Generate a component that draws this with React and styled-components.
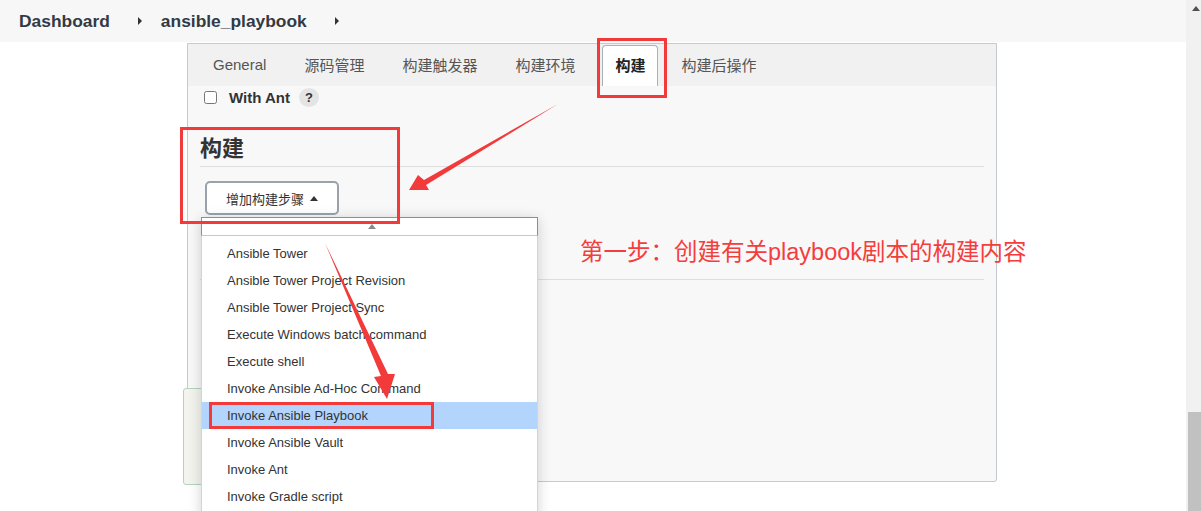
import React from "react";
import styled, { createGlobalStyle } from "styled-components";

const GlobalStyle = createGlobalStyle`
  html, body {
    margin: 0;
    padding: 0;
    background: #ffffff;
    overflow: hidden;
  }
  body {
    font-family: "Liberation Sans", "Noto Sans CJK SC", sans-serif;
    color: #333333;
  }
`;

const Page = styled.div`
  position: relative;
  display: flex;
  height: 511px;
  overflow: hidden;
`;

const Main = styled.div`
  flex: 1;
  min-width: 0;
  display: flex;
  flex-direction: column;
`;

const TopBar = styled.div`
  height: 42px;
  background: #f7f7f7;
  display: flex;
  align-items: center;
  padding-left: 19px;
`;

const Crumb = styled.span`
  font-size: 17.4px;
  font-weight: bold;
  color: #333a44;
  margin-right: 28px;
`;

const CrumbCaret = styled.span`
  width: 0;
  height: 0;
  border-top: 4px solid transparent;
  border-bottom: 4px solid transparent;
  border-left: 4px solid #333;
  margin-right: 19px;
`;

const Content = styled.div`
  padding: 1px 0 0 187px;
`;

const Panel = styled.div`
  position: relative;
  box-sizing: border-box;
  width: 810px;
  height: 439px;
  border: 1px solid #c4cad0;
  border-radius: 0 0 3px 0;
  background: #f8f8f8;
`;

const TabBar = styled.div`
  height: 42px;
  background: #f1f1f1;
  display: flex;
  align-items: flex-end;
  gap: 16px;
  padding-left: 14px;
`;

const Tab = styled.div`
  box-sizing: border-box;
  height: 41px;
  padding: 0 ${(p) => (p.$active ? 12 : 10)}px 3px;
  margin-right: ${(p) => (p.$active ? -4 : 0)}px;
  display: flex;
  align-items: center;
  font-size: 15px;
  color: ${(p) => (p.$active ? "#222" : "#555")};
  font-weight: ${(p) => (p.$active ? "bold" : "normal")};
  background: ${(p) => (p.$active ? "#fff" : "transparent")};
  border: 1px solid ${(p) => (p.$active ? "#a9b1b8" : "transparent")};
  border-bottom: none;
  border-radius: 4px 4px 0 0;
`;

const Body = styled.div`
  padding: 0 12px 0 12px;
`;

const CheckRow = styled.div`
  display: flex;
  align-items: center;
  height: 18px;
  margin-top: 2px;
  padding-left: 4px;
`;

const Check = styled.input`
  width: 13px;
  height: 13px;
  margin: 0 12px 0 0;
`;

const CheckLabel = styled.span`
  font-size: 15px;
  font-weight: bold;
  color: #333;
`;

const Help = styled.span`
  width: 20px;
  height: 19px;
  border-radius: 50%;
  background: #e4e4e4;
  margin-left: 9px;
  display: flex;
  align-items: center;
  justify-content: center;
  font-size: 13px;
  font-weight: bold;
  color: #333;
`;

const Heading = styled.h2`
  margin: 27px 0 0;
  font-size: 22px;
  font-weight: bold;
  line-height: 32px;
  padding-bottom: 1px;
  border-bottom: 1px solid #dedede;
  color: #333;
`;

const StepWrap = styled.div`
  position: relative;
  width: 134px;
  margin: 14px 0 0 5px;
`;

const AddButton = styled.button`
  box-sizing: border-box;
  width: 134px;
  height: 34px;
  border: 2px solid #9aa3ab;
  border-radius: 5px;
  background: #fff;
  font-family: inherit;
  font-size: 13px;
  color: #333;
  display: flex;
  align-items: center;
  justify-content: center;
  gap: 6px;
  padding: 0;
`;

const UpCaret = styled.span`
  width: 0;
  height: 0;
  border-left: ${(p) => p.$size}px solid transparent;
  border-right: ${(p) => p.$size}px solid transparent;
  border-bottom: ${(p) => p.$size + 1}px solid ${(p) => p.$color};
`;

const Dropdown = styled.div`
  position: absolute;
  top: calc(100% + 2px);
  left: -4px;
  width: 337px;
  background: #fff;
  box-shadow: 0 2px 12px rgba(0, 0, 0, 0.18);
  z-index: 2;
`;

const DropHeader = styled.div`
  box-sizing: border-box;
  height: 19px;
  border: 1px solid #8f8f8f;
  border-bottom-color: #c8c8c8;
  display: flex;
  align-items: center;
  justify-content: center;
  padding-left: 4px;
`;

const DropList = styled.div`
  padding: 4px 0 40px;
  border-left: 1px solid #d4d4d4;
  border-right: 1px solid #d4d4d4;
`;

const DropItem = styled.div`
  height: 27px;
  line-height: 27px;
  padding-left: 25px;
  font-size: 13px;
  color: #333;
  background: ${(p) => (p.$active ? "#b3d4fc" : "transparent")};
`;

const Divider = styled.div`
  margin-top: 64px;
  border-top: 1px solid #dedede;
`;

const BottomBar = styled.div`
  position: absolute;
  left: -5px;
  top: 344px;
  box-sizing: border-box;
  width: 300px;
  height: 97px;
  border: 1px solid #b5d3bf;
  border-radius: 3px;
  background: linear-gradient(to right, #f4f4ef, #ecece6);
  z-index: 1;
`;

const Scrollbar = styled.div`
  width: 15px;
  background: #f1f1f1;
  display: flex;
  flex-direction: column;
`;

const ScrollArrow = styled.div`
  height: 17px;
  display: flex;
  align-items: center;
  justify-content: center;
  padding-left: 4px;
`;

const ScrollSpace = styled.div`
  flex: 1;
`;

const ScrollThumb = styled.div`
  height: 99px;
  margin-left: 2px;
  background: #c1c1c1;
`;

const Overlay = styled.svg`
  position: absolute;
  left: 0;
  top: 0;
  pointer-events: none;
  z-index: 5;
`;

const Note = styled.div`
  position: absolute;
  left: 580px;
  top: 238px;
  font-size: 23.5px;
  line-height: 28px;
  color: #f53d3d;
  white-space: nowrap;
  z-index: 5;
`;

const tabs = ["General", "源码管理", "构建触发器", "构建环境", "构建", "构建后操作"];

const steps = [
  "Ansible Tower",
  "Ansible Tower Project Revision",
  "Ansible Tower Project Sync",
  "Execute Windows batch command",
  "Execute shell",
  "Invoke Ansible Ad-Hoc Command",
  "Invoke Ansible Playbook",
  "Invoke Ansible Vault",
  "Invoke Ant",
  "Invoke Gradle script",
];

const RED = "#f23a3a";

const App = () => {
  return (
    <Page>
      <GlobalStyle />
      <Main>
        <TopBar>
          <Crumb>Dashboard</Crumb>
          <CrumbCaret />
          <Crumb>ansible_playbook</Crumb>
          <CrumbCaret />
        </TopBar>
        <Content>
          <Panel>
            <TabBar>
              {tabs.map((t) => (
                <Tab key={t} $active={t === "构建"}>
                  {t}
                </Tab>
              ))}
            </TabBar>
            <Body>
              <CheckRow>
                <Check type="checkbox" />
                <CheckLabel>With Ant</CheckLabel>
                <Help>?</Help>
              </CheckRow>
              <Heading>构建</Heading>
              <StepWrap>
                <AddButton>
                  增加构建步骤
                  <UpCaret $size={4} $color="#333" />
                </AddButton>
                <Dropdown>
                  <DropHeader>
                    <UpCaret $size={4} $color="#8a8a8a" />
                  </DropHeader>
                  <DropList>
                    {steps.map((s) => (
                      <DropItem key={s} $active={s === "Invoke Ansible Playbook"}>
                        {s}
                      </DropItem>
                    ))}
                  </DropList>
                </Dropdown>
              </StepWrap>
              <Divider />
            </Body>
            <BottomBar />
          </Panel>
        </Content>
      </Main>
      <Scrollbar>
        <ScrollArrow>
          <UpCaret $size={4} $color="#505050" />
        </ScrollArrow>
        <ScrollSpace />
        <ScrollThumb />
      </Scrollbar>

      <Note>第一步：创建有关playbook剧本的构建内容</Note>
      <Overlay width="1201" height="511" viewBox="0 0 1201 511">
        <g fill="none" stroke={RED} strokeWidth="3">
          <rect x="598.5" y="39.5" width="67" height="57" />
          <rect x="181.5" y="128.5" width="217" height="94" />
          <rect x="210.5" y="403.5" width="222" height="24" />
        </g>
        <g fill={RED}>
          <polygon points="558,104 424,180 418,175 409,190 429,190 426,185" />
          <polygon points="325,243 381,376 374,377 387,399 395,374 388,374" />
        </g>
      </Overlay>
    </Page>
  );
};

export default App;
